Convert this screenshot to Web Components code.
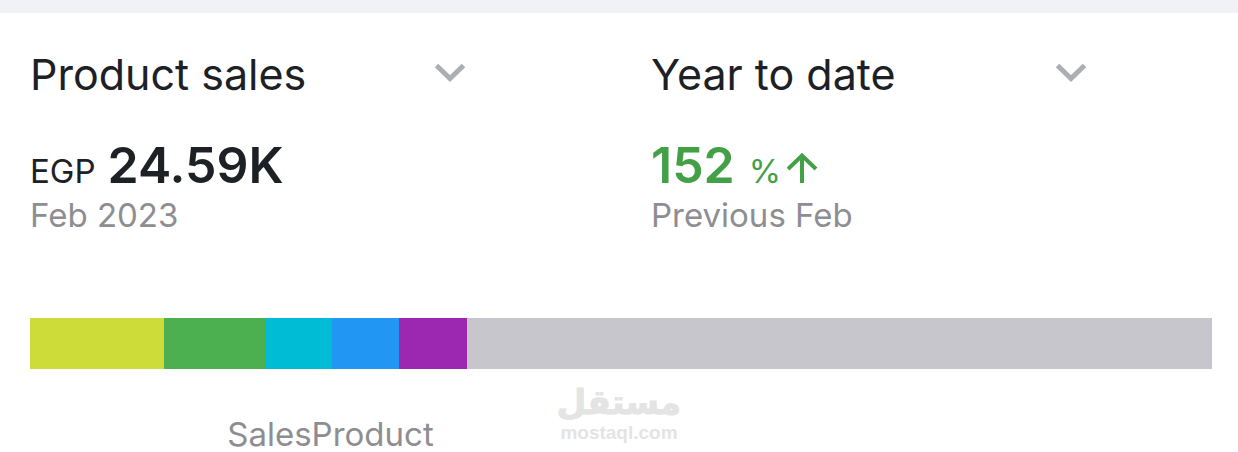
<!DOCTYPE html>
<html lang="en">
<head>
<meta charset="utf-8">
<meta name="viewport" content="width=device-width, initial-scale=1">
<title>Product sales</title>
<style>
  body { margin: 0; background: #fff; color: #1d2126; font-family: Inter, "Liberation Sans", sans-serif; overflow-x: hidden; }
</style>
</head>
<body>
<sales-card></sales-card>
<script>
class MetricSelect extends HTMLElement {
  constructor() {
    super();
    const label = this.getAttribute('label');
    this.attachShadow({ mode: 'open' }).innerHTML = `
      <style>
        :host { display: grid; align-items: center; width: 78%; }
        select, svg { grid-area: 1 / 1; }
        select {
          appearance: none; width: 100%; margin: 0; padding: 0 40px 0 0; border: 0;
          background: none; color: inherit; font: 400 43px/56px Inter, "Liberation Sans", sans-serif; cursor: pointer;
        }
        svg { justify-self: end; width: 32px; height: 24px; margin-right: 2px; pointer-events: none; }
      </style>
      <select aria-label="${this.getAttribute('name')}"><option>${label}</option></select>
      <svg viewBox="0 0 32 24" aria-hidden="true"><path d="M2.5 3.5 16 16.5 29.5 3.5" fill="none" stroke="#acafb2" stroke-width="5"/></svg>`;
  }
}
customElements.define('metric-select', MetricSelect);

class MetricPanel extends HTMLElement {
  constructor() {
    super();
    this.attachShadow({ mode: 'open' }).innerHTML = `
      <style>
        :host { display: flex; flex-direction: column; min-width: 0; }
        .value { display: flex; align-items: baseline; margin-top: 35px; font-size: 33px; line-height: 56px; white-space: nowrap; }
        .period { color: #8e8e92; font-size: 33px; line-height: 32px; }
        :host([trend="up"]) .value { color: #43a047; }
      </style>
      <slot name="select"></slot>
      <div class="value"><slot></slot></div>
      <div class="period"><slot name="period"></slot></div>`;
  }
}
customElements.define('metric-panel', MetricPanel);

class ShareBar extends HTMLElement {
  constructor() {
    super();
    const parts = [['#cddc39', 20], ['#4caf50', 15], ['#00bcd4', 10], ['#2196f3', 10], ['#9c27b0', 10], ['#c7c6cc', 111]];
    this.attachShadow({ mode: 'open' }).innerHTML = `
      <style>
        :host { display: flex; height: 51px; }
        span { flex-basis: 0; }
      </style>
      ${parts.map(([c, n]) => `<span style="background:${c};flex-grow:${n}"></span>`).join('')}`;
  }
}
customElements.define('share-bar', ShareBar);

class SiteMark extends HTMLElement {
  constructor() {
    super();
    this.attachShadow({ mode: 'open' }).innerHTML = `
      <style>
        :host { display: flex; flex-direction: column; align-items: center; color: #e4e4e4; }
        .ar { font: 700 34px/40px "DejaVu Sans", sans-serif; -webkit-text-stroke: 1px #e4e4e4; }
        .en { font: 700 19px/22px "Liberation Sans", sans-serif; }
      </style>
      <span class="ar" lang="ar" dir="rtl">مستقل</span>
      <span class="en">mostaql.com</span>`;
  }
}
customElements.define('site-mark', SiteMark);

class SalesCard extends HTMLElement {
  constructor() {
    super();
    this.attachShadow({ mode: 'open' }).innerHTML = `
      <style>
        :host { display: block; position: relative; border-top: 13px solid #f0f2f5; }
        main { padding: 33px 26px 0 30px; }
        .metrics { display: grid; grid-template-columns: 1fr 1fr; column-gap: 60px; }
        strong { font-size: 50px; font-weight: 600; }
        .amount { margin-left: 12px; }
        .unit { margin-left: 14px; }
        .arrow { width: 32px; height: 32px; margin-left: 6px; }
        share-bar { margin-top: 87px; }
        .legend { display: grid; grid-template-columns: 1fr 1fr; margin-top: 47px; color: #8e8e92; font-size: 33px; line-height: 36px; text-align: center; }
        .legend span { padding-left: 10px; }
        site-mark { position: absolute; bottom: 8px; left: 0; right: 0; pointer-events: none; }
      </style>
      <main>
        <section class="metrics">
          <metric-panel>
            <metric-select slot="select" name="Metric" label="Product sales"></metric-select>
            <span>EGP</span><strong class="amount">24.59K</strong>
            <span slot="period">Feb 2023</span>
          </metric-panel>
          <metric-panel trend="up">
            <metric-select slot="select" name="Range" label="Year to date"></metric-select>
            <strong>152</strong><span class="unit">%</span>
            <svg class="arrow" viewBox="0 0 32 32" role="img" aria-label="Up"><path d="M15 32V5M1 18 15 4.5 29 18" fill="none" stroke="#43a047" stroke-width="4"/></svg>
            <span slot="period">Previous Feb</span>
          </metric-panel>
        </section>
        <share-bar></share-bar>
        <div class="legend"><span>SalesProduct</span></div>
      </main>
      <site-mark></site-mark>`;
  }
}
customElements.define('sales-card', SalesCard);
</script>
</body>
</html>
